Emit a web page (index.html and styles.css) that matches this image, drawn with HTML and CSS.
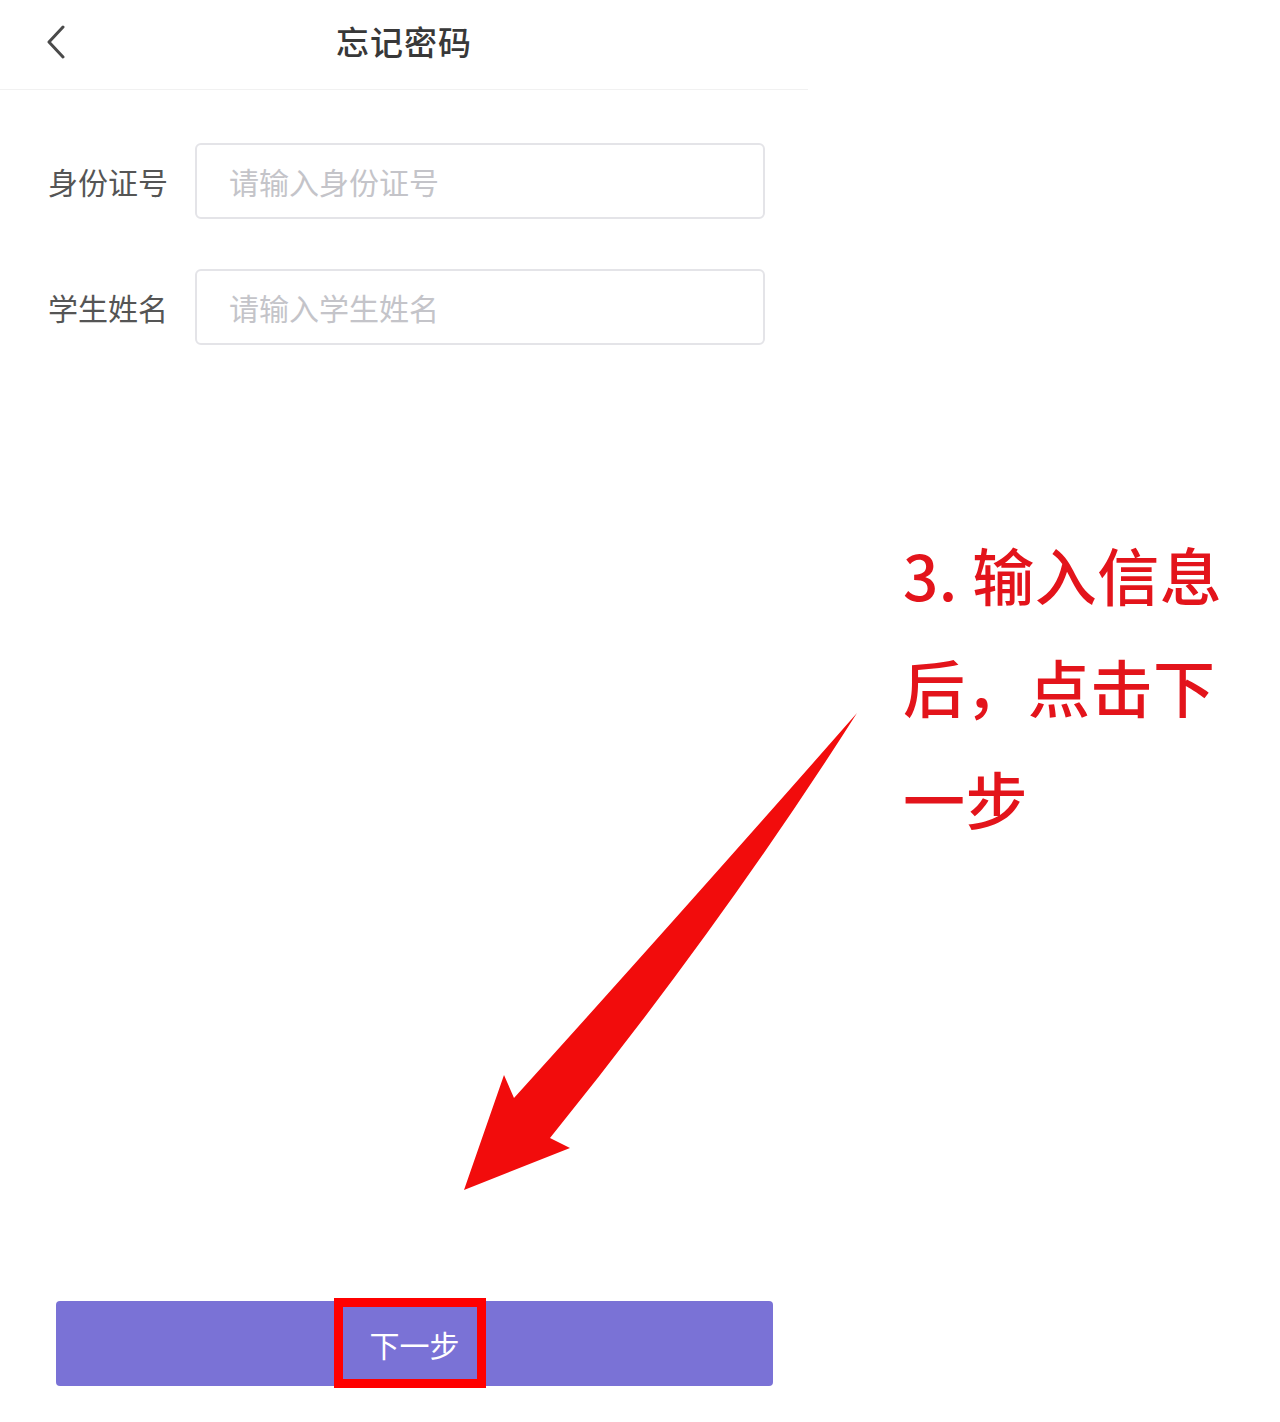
FILE: index.html
```html
<!DOCTYPE html>
<html lang="zh-CN">
<head>
<meta charset="utf-8">
<title>忘记密码</title>
<link rel="stylesheet" href="styles.css">
</head>
<body>
<div class="page">
  <div class="phone">
    <header class="nav">
      <span class="back">
        <svg width="24" height="34" viewBox="0 0 24 34"><path d="M19 2 L5 17 L19 32" fill="none" stroke="#4a4a4a" stroke-width="3" stroke-linecap="round" stroke-linejoin="round"/></svg>
      </span>
      <h1 class="title">忘记密码</h1>
    </header>
    <form class="form">
      <div class="row">
        <label class="label">身份证号</label>
        <input class="field" type="text" placeholder="请输入身份证号">
      </div>
      <div class="row">
        <label class="label">学生姓名</label>
        <input class="field" type="text" placeholder="请输入学生姓名">
      </div>
    </form>
    <div class="footer">
      <button class="next" type="button">下一步<span class="mark"></span></button>
    </div>
  </div>
  <div class="note">
    <div class="note-line">3. 输入信息</div>
    <div class="note-line">后，点击下</div>
    <div class="note-line">一步</div>
  </div>
  <svg class="arrow" width="1280" height="1422" viewBox="0 0 1280 1422">
    <path d="M857 713 Q722 925 550 1138 L570 1148 L464 1190 L504 1075 L514 1098 Q693 900 857 713 Z" fill="#f20c0c"/>
  </svg>
</div>
</body>
</html>
```
FILE: styles.css
```css
* { box-sizing: border-box; }
html, body { margin: 0; padding: 0; background: #fff; }
body { font-family: "Noto Sans CJK SC", "Noto Sans", sans-serif; }

.page { position: relative; width: 1280px; height: 1422px; }

.phone {
  width: 808px;
  height: 1422px;
  display: flex;
  flex-direction: column;
}

.nav {
  position: relative;
  height: 90px;
  border-bottom: 1px solid #f1f1f1;
  display: flex;
  align-items: center;
  justify-content: center;
}
.back {
  position: absolute;
  left: 44px;
  top: 25px;
  display: flex;
}
.title {
  margin: 0;
  font-size: 33px;
  font-weight: 500;
  color: #383838;
  line-height: 1;
  margin-top: -6px;
  letter-spacing: 1px;
}

.form {
  padding: 53px 0 0 48px;
  display: flex;
  flex-direction: column;
  gap: 50px;
}
.row {
  display: flex;
  align-items: center;
  gap: 28px;
}
.label {
  width: 119px;
  font-size: 30px;
  color: #555;
  white-space: nowrap;
}
.field {
  width: 570px;
  height: 76px;
  border: 2px solid #e4e4e8;
  border-radius: 6px;
  padding: 0 0 0 32px;
  font-family: inherit;
  font-size: 30px;
  color: #333;
  outline: none;
}
.field::placeholder { color: #c4c4c9; }

.footer {
  margin-top: auto;
  padding: 0 0 36px 56px;
}
.next {
  position: relative;
  width: 717px;
  height: 85px;
  border: none;
  border-radius: 4px;
  background: #7a72d6;
  color: #fff;
  font-family: inherit;
  font-size: 30px;
  padding: 0;
}
.mark {
  position: absolute;
  left: 278px;
  top: -3px;
  width: 152px;
  height: 90px;
  border: 9px solid #ff0000;
}

.note {
  position: absolute;
  left: 903px;
  top: 518px;
  color: #e3141b;
  font-size: 62px;
  font-weight: 500;
  line-height: 112px;
  white-space: nowrap;
}
.note-line { letter-spacing: 0.5px; }

.arrow {
  position: absolute;
  left: 0;
  top: 0;
  pointer-events: none;
}
```
